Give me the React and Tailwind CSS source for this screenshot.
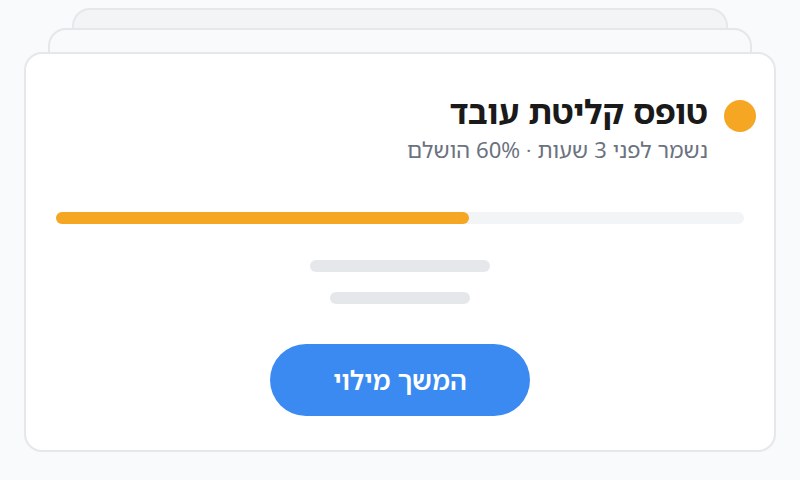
import React from "react";

export default function App() {
  const progress = 60;
  const subtitle = `נשמר לפני 3 שעות · ${progress}% הושלם`;

  return (
    <div
      dir="rtl"
      className="min-h-[480px] w-full bg-[#f9fafb] pt-[52px] px-6"
      style={{ fontFamily: '"Noto Sans Hebrew", "Liberation Sans", sans-serif' }}
    >
      <div className="relative h-[400px]">
        {/* Stacked cards behind */}
        <div className="absolute -top-[44px] left-12 right-12 h-20 rounded-[18px] border-2 border-[#e5e7eb] bg-[#f3f4f6]" />
        <div className="absolute -top-[24px] left-6 right-6 h-20 rounded-[18px] border-2 border-[#e5e7eb] bg-[#f9fafb]" />

        {/* Main card */}
        <div className="relative flex h-full flex-col rounded-[18px] border-2 border-[#e5e7eb] bg-white px-[18px] pt-[35px]">
          {/* Header */}
          <div className="flex items-start gap-4">
            <div className="mt-[11px] h-8 w-8 shrink-0 rounded-full bg-[#f5a623]" />
            <div className="flex flex-col">
              <h1 className="text-[33px] font-bold leading-[46px] text-[#1a1a1a]">
                טופס קליטת עובד
              </h1>
              <p className="text-[22px] leading-[30px] text-[#6b7280]">{subtitle}</p>
            </div>
          </div>

          <div className="flex flex-col items-center px-3">
            {/* Progress */}
            <div dir="ltr" className="mt-[47px] h-3 w-full rounded-full bg-[#f3f4f6]">
              <div
                className="h-3 rounded-full bg-[#f5a623]"
                style={{ width: `${progress}%` }}
              />
            </div>

            {/* Skeleton lines */}
            <div className="mt-9 h-3 w-[180px] rounded-full bg-[#e5e7eb]" />
            <div className="mt-5 h-3 w-[140px] rounded-full bg-[#e5e7eb]" />

            {/* Button */}
            <button className="mt-10 flex h-[72px] w-[260px] items-center justify-center rounded-full bg-[#3a8af2] text-[26px] font-semibold text-white">
              המשך מילוי
            </button>
          </div>
        </div>
      </div>
    </div>
  );
}
